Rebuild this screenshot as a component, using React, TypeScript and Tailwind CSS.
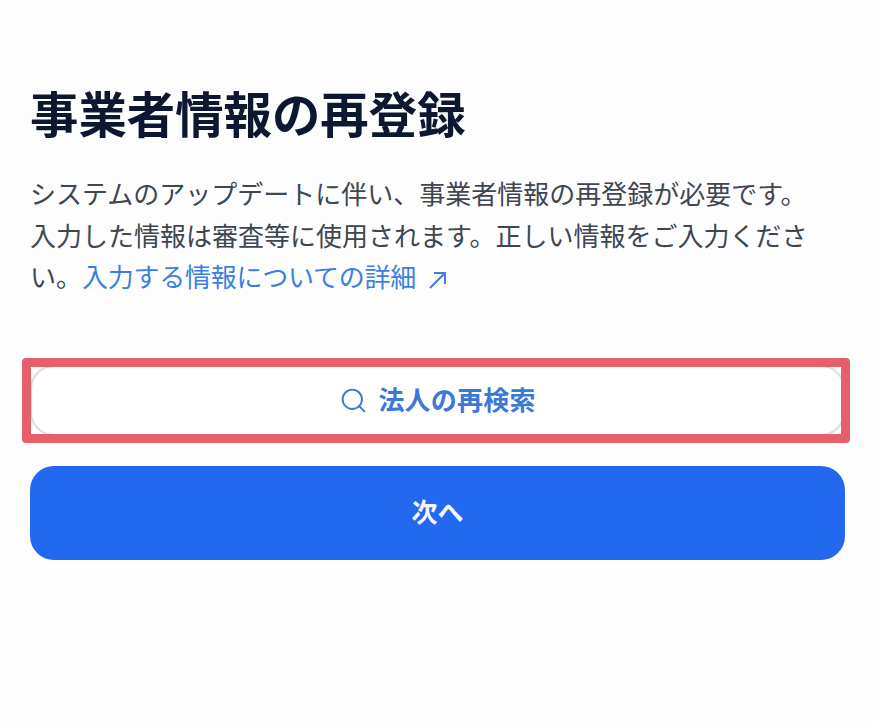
import { Search } from 'lucide-react';

const FONT = "font-['Inter','Noto_Sans_CJK_JP',sans-serif]";

export default function App() {
  return (
    <div className={`${FONT} h-[724px] w-[878px] overflow-hidden bg-[#fdfdfd] px-[30px] pt-[86px]`}>
      <h1 className="text-[48.4px] leading-[60px] font-bold text-[#0c1730]">事業者情報の再登録</h1>

      <p className="mt-[28px] w-[790px] text-[26px] leading-[41.5px] text-[#40464f]">
        システムのアップデートに伴い、事業者情報の再登録が必要です。
        入力した情報は審査等に使用されます。正しい情報をご入力ください。
        <a className="tracking-[-0.25px] text-[#3b7fe3]">
          入力する情報についての詳細
          <svg
            viewBox="0 0 20 20"
            fill="none"
            stroke="currentColor"
            strokeWidth={2}
            className="ml-[12px] inline-block h-[20px] w-[20px] align-[-3px]"
          >
            <path d="M2 18 17 3M6 3h11v11" />
          </svg>
        </a>
      </p>

      <div className="relative mt-[66px] w-[815px]">
        <button className="flex h-[71px] w-full items-center justify-center gap-[10px] rounded-[24px] border-2 border-[#dddddd] bg-white text-[26px] font-bold tracking-[0.2px] text-[#3b78d8]">
          <Search className="h-[29px] w-[29px]" strokeWidth={1.6} />
          法人の再検索
        </button>
        <div className="absolute top-[-7px] left-[-8px] h-[85px] w-[828px] rounded-[4px] border-[9px] border-[#e5606b]" />
      </div>

      <button className="mt-[30px] flex h-[94px] w-[815px] items-center justify-center rounded-[24px] bg-[#2369f0] text-[26px] font-bold text-[#f4f7fd]">
        次へ
      </button>
    </div>
  );
}
